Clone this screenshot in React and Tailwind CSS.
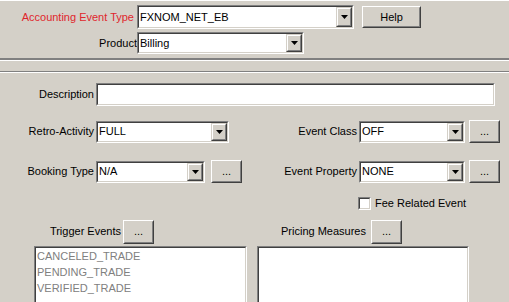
import React from "react";

const font = { fontFamily: '"Liberation Sans", Arial, sans-serif' };

// little down arrow button inside the combo
const DropButton = () => (
  <div className="w-[16px] h-full flex border border-t-[#d4d0c8] border-l-[#d4d0c8] border-b-[#404040] border-r-[#404040]">
    <div className="flex-1 flex items-center justify-center bg-[#d4d0c8] border border-t-white border-l-white border-b-[#808080] border-r-[#808080]">
      <svg width="7" height="4" viewBox="0 0 7 4">
        <polygon points="0,0 7,0 3.5,4" fill="#000" />
      </svg>
    </div>
  </div>
);

const Sunken = ({ className, children }) => (
  <div className={`flex border border-t-[#808080] border-l-[#808080] border-b-white border-r-white ${className}`}>
    <div className="flex-1 flex min-w-0 bg-white border border-t-[#404040] border-l-[#404040] border-b-[#d4d0c8] border-r-[#d4d0c8]">
      {children}
    </div>
  </div>
);

const Combo = ({ value, className }) => (
  <Sunken className={className}>
    <span className="flex-1 flex items-center pl-[1px] text-[11px] text-black leading-none">{value}</span>
    <DropButton />
  </Sunken>
);

const Button = ({ children, className }) => (
  <div className={`flex border border-t-white border-l-white border-b-[#404040] border-r-[#404040] ${className}`}>
    <div className="flex-1 flex items-center justify-center bg-[#d4d0c8] border border-t-[#d4d0c8] border-l-[#d4d0c8] border-b-[#808080] border-r-[#808080] text-[11px] text-black leading-none">
      {children}
    </div>
  </div>
);

export default function App() {
  return (
    <div className="w-[509px] h-[302px] overflow-hidden bg-[#d4d0c8] text-[11px] text-black" style={font}>
      {/* Header */}
      <div className="h-[60px] border-t border-t-white border-b-2 border-b-[#808080] pt-[4px] relative">
        <div className="flex items-center">
          <span className="w-[134px] text-right text-[#e0262c]">Accounting Event Type</span>
          <Combo value="FXNOM_NET_EB" className="ml-[3px] w-[217px] h-[24px]" />
          <Button className="ml-[8px] w-[59px] h-[22px]">Help</Button>
        </div>
        <div className="flex items-center mt-[3px]">
          <span className="w-[137px] text-right">Product</span>
          <Combo value="Billing" className="w-[167px] h-[22px]" />
        </div>
      </div>
      <div className="h-[12px] border-t border-t-white border-b border-b-[#808080]"></div>
      <div className="border-t border-t-white">
        {/* Description */}
        <div className="flex items-center mt-[10px]">
          <span className="w-[94px] text-right">Description</span>
          <Sunken className="ml-[2px] w-[399px] h-[23px]">
            <span></span>
          </Sunken>
        </div>

        <div className="flex items-center mt-[14px]">
          <span className="w-[94px] text-right">Retro-Activity</span>
          <Combo value="FULL" className="ml-[2px] w-[133px] h-[22px]" />
          <span className="w-[128px] text-right">Event Class</span>
          <Combo value="OFF" className="ml-[2px] w-[106px] h-[22px]" />
          <Button className="ml-[4px] w-[31px] h-[23px]">...</Button>
        </div>

        <div className="flex items-center mt-[17px]">
          <span className="w-[94px] text-right">Booking Type</span>
          <Combo value="N/A" className="ml-[2px] w-[109px] h-[22px]" />
          <Button className="ml-[6px] w-[31px] h-[23px]">...</Button>
          <span className="w-[115px] text-right">Event Property</span>
          <Combo value="NONE" className="ml-[2px] w-[106px] h-[22px]" />
          <Button className="ml-[4px] w-[31px] h-[23px]">...</Button>
        </div>

        <div className="flex items-center mt-[12px] ml-[358px]">
          <Sunken className="w-[13px] h-[13px]">
            <span></span>
          </Sunken>
          <span className="ml-[4px]">Fee Related Event</span>
        </div>

        <div className="flex items-center mt-[8px]">
          <span className="w-[121px] text-right">Trigger Events</span>
          <Button className="ml-[2px] w-[31px] h-[24px]">...</Button>
          <span className="w-[212px] text-right">Pricing Measures</span>
          <Button className="ml-[5px] w-[31px] h-[24px]">...</Button>
        </div>

        <div className="flex mt-[2px] ml-[34px] gap-[10px]">
          <Sunken className="w-[213px] h-[60px]">
            <div className="flex flex-col pl-[1px] text-[#808080] leading-[16px]">
              <span>CANCELED_TRADE</span>
              <span>PENDING_TRADE</span>
              <span>VERIFIED_TRADE</span>
            </div>
          </Sunken>
          <Sunken className="w-[212px] h-[60px]">
            <span></span>
          </Sunken>
        </div>
      </div>
    </div>
  );
}
